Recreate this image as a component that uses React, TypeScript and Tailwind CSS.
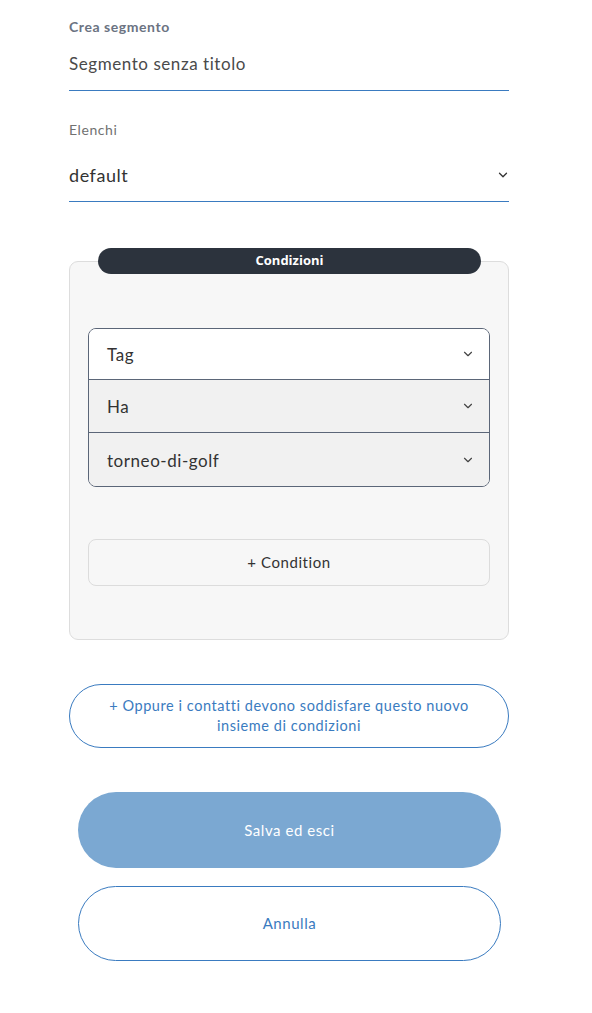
import { ChevronDown } from "lucide-react"

const font = { fontFamily: "Lato, 'Noto Sans', sans-serif", letterSpacing: "0.035em" }

function SelectRow({ label, white, last }: { label: string; white?: boolean; last?: boolean }) {
  return (
    <div
      className={`flex items-center justify-between pl-[18px] pr-[14px] ${white ? "bg-white h-[51px]" : "bg-[#f1f1f1] h-[53px]"} ${last ? "" : "border-b border-[#5b6678]"}`}
    >
      <span className="text-[17px] text-[#333] mt-[2px]">{label}</span>
      <ChevronDown size={14} strokeWidth={2} className="text-[#444]" />
    </div>
  )
}

export default function App() {
  return (
    <div className="min-h-screen bg-white" style={font}>
      <div className="w-[440px] ml-[69px] pt-[18px] pb-[50px]">
        <div className="text-[14px] font-bold text-[#6b7382] leading-[18px]">Crea segmento</div>
        <div className="mt-[17px] text-[17px] text-[#4a4a4a] leading-[22px] pb-[15px] border-b border-[#3a7bc0]">
          Segmento senza titolo
        </div>

        <div className="mt-[30px] text-[14px] text-[#717171] leading-[18px]">Elenchi</div>
        <div className="mt-[24px] flex items-center justify-between pb-[14px] border-b border-[#3a7bc0]">
          <span className="text-[18px] text-[#333] leading-[24px]">default</span>
          <ChevronDown size={14} strokeWidth={2.2} className="text-[#333] -mr-[1px]" />
        </div>

        <div className="relative mt-[59px] bg-[#f7f7f7] border border-[#dddddd] rounded-[9px] h-[379px] px-[18px] pt-[66px]">
          <div
            className="absolute left-[28px] right-[27px] -top-[14px] h-[26px] bg-[#2c333d] rounded-full flex items-center justify-center text-white text-[13px] font-bold"
            style={{ fontFamily: "'Open Sans', sans-serif", letterSpacing: 0 }}
          >
            Condizioni
          </div>
          <div className="border border-[#5b6678] rounded-[8px] overflow-hidden">
            <SelectRow label="Tag" white />
            <SelectRow label="Ha" />
            <SelectRow label="torneo-di-golf" last />
          </div>
          <button className="mt-[52px] w-full h-[47px] border border-[#dcdcdc] rounded-[8px] text-[15px] text-[#333] flex items-center justify-center">
            + Condition
          </button>
        </div>

        <button className="mt-[44px] w-full h-[64px] border border-[#3a7bc0] rounded-full text-[14.5px] text-[#3a7bc0] leading-[20px] px-[30px] text-center">
          + Oppure i contatti devono soddisfare questo nuovo insieme di condizioni
        </button>

        <div className="px-[9px] pr-[8px]">
          <button className="mt-[44px] w-full h-[76px] bg-[#7ba8d2] rounded-full text-white text-[15px]">
            Salva ed esci
          </button>
          <button className="mt-[18px] w-full h-[75px] border border-[#3a7bc0] rounded-full text-[#3a7bc0] text-[15px]">
            Annulla
          </button>
        </div>
      </div>
    </div>
  )
}
